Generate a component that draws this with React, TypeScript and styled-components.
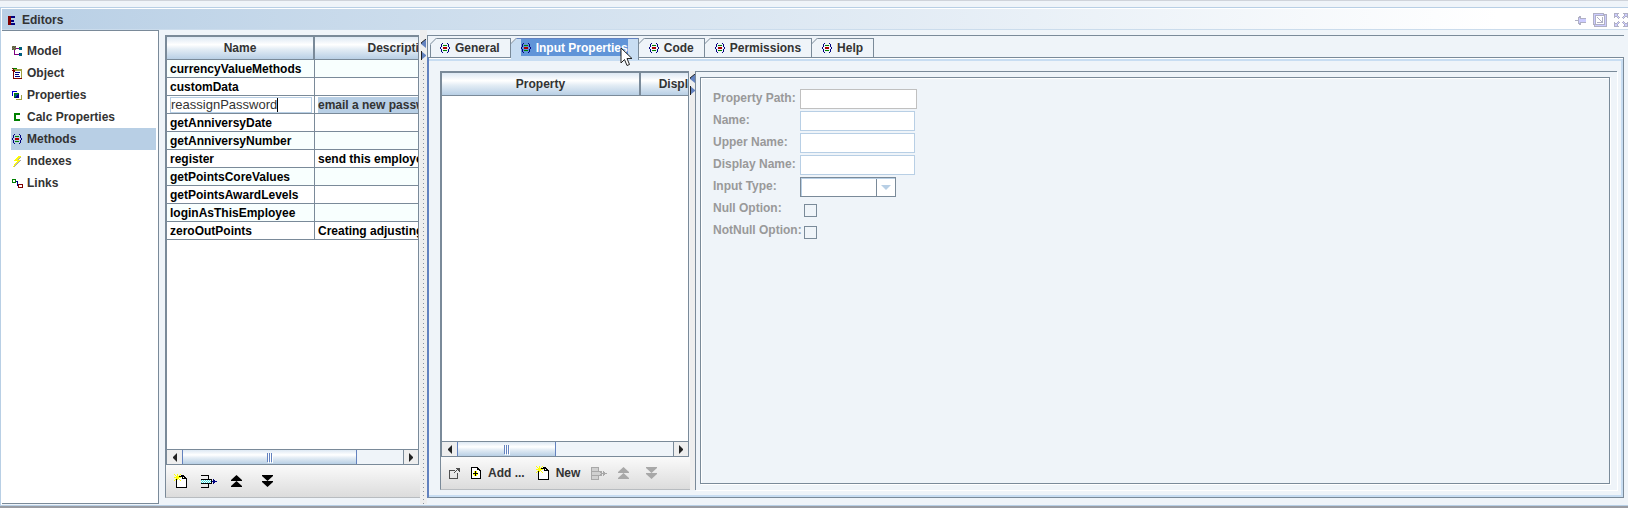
import React from 'react';
import styled, { createGlobalStyle, css } from 'styled-components';

const c = {
  line: '#7a8a99',
  blue: '#6382bf',
  select: '#b8cfe5',
  tab: '#c8ddf2',
  bg: '#eff4f9',
  text: '#333333',
  muted: '#999999',
};

const headerFill = 'linear-gradient(#dde8f3, #ffffff 35%, #e4edf5 55%, #b8cfe5)';

const GlobalStyle = createGlobalStyle`
  * { box-sizing: border-box; }
  body { margin: 0; background: ${c.bg}; }
  body, button, input, select, table {
    font: bold 12px/16px "Liberation Sans", Arial, sans-serif;
    color: ${c.text};
  }
  button { border: 0; padding: 0; background: none; }
`;

/* ---------- icons ---------- */

const palette: Record<string, string> = {
  k: '#000000', n: '#000080', b: '#0000cc', r: '#aa0000', m: '#800000', g: '#008000',
  o: '#808040', y: '#ffff00', Y: '#e8dc50', p: '#800080', t: '#006080', c: '#40e0e0',
  w: '#ffffff', a: '#a8a8a8', s: '#d0d0d0', v: '#b0b0c4', l: '#ccccff', d: '#505050', e: '#a0a040',
};

const art = {
  editors: ['mmmnnnn', 'mmmnnnn', 'mmm....', 'mmm....', 'mmmnnn.', 'mmmnnn.', 'mmm....', 'mmmnnnn', 'mmmnnnn'],
  model: ['odod.......', 'dodo...gtt.', 'ododpppttt.', 'dodo...ttt.', '..p........', '..p........', '..p........', '..p....ntt.', '..pppppttt.', '.......ttt.'],
  object: ['mgggg......', '.meeeeeeee.', 'mmmeeeeeee.', '.mmwwwwwwe.', '.mwnnnnnwe.', '.mwwwwwwwe.', '.mwnnnnwwe.', '.mwwwwwwwe.', '.mwnnnnnwe.', '.mwwwwwwwe.', '.mmmmmmmmm.'],
  properties: ['bbbbb......', 'bwwww......', 'bwggggg....', 'bwgtttn....', 'bwgttnn..e.', '..gtnnn..e.', '..gnnnn..e.', '.........e.', '....eeeeee.'],
  calc: ['gggggg', 'gggggg', 'gg....', 'gg....', 'gg....', 'gg....', 'gggggg', 'gggggg'],
  methods: ['..n....n..', '.n......n.', '.n.gggg.n.', '.n......n.', 'n..rrrr..n', 'n..rrrr..n', '.n......n.', '.n.gggg.n.', '.n......n.', '..n....n..'],
  indexes: ['......yyy.', '.....yyYa.', '....yyYa..', '...yyYa...', '..yyyyyya.', '.....yYa..', '....yYa...', '...yYa....', '..yYa.....', '..ya......', '.ya.......'],
  links: ['gggg.......', 'gwwg.......', 'gwwgnn.....', 'gggg.n.....', '.....n.....', '.....nmmmmm', '.....nmwwwm', '......mwwwm', '......mmmmm'],
  fresh: ['y..y..y......', '.y.y.y.kkk...', '..yyykkkkkk..', 'yyyyyyywkwkk.', '..yyywwwkkkkk', '.ykywywwwwwwk', 'y.kwwwywwwwwk', '..kwwwwwwwwwk', '..kwwwwwwwwwk', '..kwwwwwwwwwk', '..kwwwwwwwwwk', '..kwwwwwwwwwk', '..kwwwwwwwwwk', '..kkkkkkkkkkk'],
  insert: ['kkkkkkkk........', '.......k........', '.......k........', '.......k........', 'kkkkkkkkkkk.n...', 'cwcwcwcwcwk.nn..', 'wcwcwcwcwcknnnnn', 'cwcwcwcwcwk.nn..', 'kkkkkkkkkkk.n...', '.......k........', '.......k........', '.......k........', 'kkkkkkkk........'],
  insertOff: ['aaaaaaaa........', 'assssssa........', 'assssssa........', 'assssssa........', 'aaaaaaaaaaa.a...', 'assssssssaa.aa..', 'asssssssssaaaaaa', 'assssssssaa.aa..', 'aaaaaaaaaaa.a...', 'assssssa........', 'assssssa........', 'assssssa........', 'aaaaaaaa........'],
  add: ['kkkkkkk...', 'kwwwwwkk..', 'kwwwwwkkk.', 'kwwwwwwwkk', 'kwwykywwwk', 'kwwykywwwk', 'kwkkkkkwwk', 'kwyykyywwk', 'kwwykywwwk', 'kwwwwwwwwk', 'kwwwwwwwwk', 'kkkkkkkkkk'],
  pop: ['.......dddd', '........ddd', 'dddddd.d.dd', 'd.....d...d', 'd....d.....', 'd.......d..', 'd.......d..', 'd.......d..', 'd.......d..', 'd.......d..', 'ddddddddd..'],
  pin: ['....vv.....', '...vvv.....', '...vlvvvvvv', '...vlllllll', 'vvvvlllllll', '...vlllllll', '...vlvvvvvv', '...vvv.....', '....vv.....'],
  restore: ['vvvvvvvvvvv...', 'vlllllllllvvvv', 'vlvvvvvvvvvvlv', 'vlvwwwwwwwwvlv', 'vlvwvwwwwvwvlv', 'vlvwwvwwwvwvlv', 'vlvwwwvwwvwvlv', 'vlvwwwwvwvwvlv', 'vlvwwwwwvvwvlv', 'vlvwvvvvvvwvlv', 'vlvwwwwwwwwvlv', 'vvvvvvvvvvvvlv', '.vlllllllllllv', '.vvvvvvvvvvvvv'],
  expand: ['vvvvv....vvvvv', 'vllv......vllv', 'vllv......vllv', 'vvvlv....vlvvv', 'v..vlv..vlv..v', '....v....v....', '..............', '..............', '....v....v....', 'v..vlv..vlv..v', 'vvvlv....vlvvv', 'vllv......vllv', 'vllv......vllv', 'vvvvv....vvvvv'],
};

type IconName = keyof typeof art;

const Svg = styled.svg`
  display: block;
  flex: none;
`;

function Icon({ name }: { name: IconName }) {
  const rows = art[name];
  const w = rows[0].length;
  return (
    <Svg width={w} height={rows.length} shapeRendering="crispEdges" aria-hidden="true">
      {rows.flatMap((row, y) =>
        [...row].map((ch, x) => (ch === '.' ? null : <rect key={`${x}-${y}`} x={x} y={y} width="1" height="1" fill={palette[ch]} />)),
      )}
    </Svg>
  );
}

function Chevrons({ down, off }: { down?: boolean; off?: boolean }) {
  return (
    <Svg width="11" height="12" fill={off ? '#a8a8a8' : '#000'} aria-hidden="true">
      <path d={down ? 'M0 0H11V1L5.500 6L0 1ZM0 6H11V7L5.500 12L0 7Z' : 'M5.500 0L11 5V6H0V5ZM5.500 6L11 11V12H0V11Z'} />
    </Svg>
  );
}

/* ---------- frame ---------- */

const Page = styled.div`
  display: flex;
  flex-direction: column;
  min-height: 100vh;
  border-top: 1px solid #cfd3da;
  border-bottom: 2px solid #999ca3;
  padding-top: 6px;
`;

const Frame = styled.section`
  flex: 1;
  display: flex;
  flex-direction: column;
  border: solid ${c.select};
  border-width: 1px 0 1px 1px;
  box-shadow: inset 1px 1px #ffffff;
  padding: 1px 0 1px 1px;
`;

const TitleBar = styled.header`
  display: flex;
  align-items: center;
  gap: 7px;
  height: 21px;
  padding: 2px 0 0 6px;
  background: linear-gradient(90deg, #b8cfe5, #ffffff 92%);
  border-bottom: 1px solid #cbdcec;
`;

const Title = styled.h1`
  flex: 1;
  margin: 0;
  font: inherit;
`;

const WindowButtons = styled.div`
  display: flex;
  align-items: center;
  gap: 7px;
`;

const Body = styled.div`
  flex: 1;
  display: flex;
  min-width: 0;
`;

const Nav = styled.nav`
  flex: none;
  width: 157px;
  padding: 9px 2px 8px 9px;
  background: #ffffff;
  border: 1px solid ${c.line};
  border-left: 0;
  display: flex;
  flex-direction: column;
`;

const NavLink = styled.a<{ $active?: boolean }>`
  display: flex;
  align-items: center;
  height: 22px;
  gap: 4px;
  color: ${c.text};
  text-decoration: none;
  background: ${(p) => (p.$active ? c.select : 'transparent')};
`;

const NavIcon = styled.span`
  display: flex;
  justify-content: center;
  width: 12px;
`;

/* ---------- table panes ---------- */

const ListPane = styled.section<{ $width: number; $spaced?: boolean }>`
  flex: none;
  display: flex;
  flex-direction: column;
  width: ${(p) => p.$width}px;
  margin: ${(p) => (p.$spaced ? '5px 0 6px 6px' : '0')};
`;

const Scroller = styled.div`
  flex: 1;
  display: flex;
  flex-direction: column;
  overflow: hidden;
  margin-right: 1px;
  border: 2px solid ${c.line};
  border-width: 2px 1px 0 2px;
  background: #ffffff;
`;

const Viewport = styled.div`
  flex: 1;
  overflow: hidden;
`;

const Grid = styled.table<{ $width: number }>`
  table-layout: fixed;
  width: ${(p) => p.$width}px;
  border-spacing: 0;
  white-space: nowrap;
`;

const HeadCell = styled.th<{ $width: number }>`
  width: ${(p) => p.$width}px;
  height: 23px;
  padding: 0;
  background: ${headerFill};
  border-right: 2px solid ${c.line};
  border-bottom: 1px solid ${c.line};
`;

const Cell = styled.td`
  height: 18px;
  padding: 1px 2px 0 3px;
  overflow: hidden;
  color: #000000;
  line-height: 16px;
  border-right: 1px solid ${c.line};
  border-bottom: 1px solid ${c.line};
`;

const Row = styled.tr`
  &:nth-child(odd) { background: #f8fffe; }
  &:nth-child(3) { background: #ffffff; }
`;

const Picked = styled.div`
  background: ${c.select};
  color: ${c.text};
`;

const CellEditor = styled.div`
  display: flex;
  align-items: center;
  height: 16px;
  border: 1px solid ${c.select};
  background: #ffffff;
`;

const CellInput = styled.input`
  field-sizing: content;
  height: 14px;
  padding: 0;
  border: 0;
  border-right: 1px solid #000000;
  outline: 0;
  background: none;
  font-size: 13px;
  font-weight: normal;
  line-height: 14px;
`;

const ScrollBar = styled.div`
  display: flex;
  height: 16px;
  border: solid ${c.line};
  border-width: 1px 0;
  background: ${c.bg};
`;

const ScrollArrow = styled.button<{ $end?: boolean }>`
  width: 15px;
  display: flex;
  align-items: center;
  justify-content: center;
  background: #eeeeee;
  border-left: ${(p) => (p.$end ? `1px solid ${c.line}` : '0')};
`;

const Thumb = styled.div<{ $share: number }>`
  display: flex;
  align-items: center;
  justify-content: center;
  gap: 1px;
  width: ${(p) => p.$share}%;
  border: solid ${c.blue};
  border-width: 0 1px;
  background: ${headerFill};
`;

const Grip = styled.i`
  width: 1px;
  height: 9px;
  background: ${c.blue};
  box-shadow: 1px 1px #ffffff;
`;

const Track = styled.div`
  flex: 1;
  display: flex;
`;

function HScroll({ share }: { share: number }) {
  return (
    <ScrollBar>
      <ScrollArrow aria-label="Scroll left">
        <Svg width="4" height="9"><path d="M4 0V9L0 5V4Z" fill="#222" /></Svg>
      </ScrollArrow>
      <Track>
        <Thumb $share={share}><Grip /><Grip /><Grip /></Thumb>
      </Track>
      <ScrollArrow $end aria-label="Scroll right">
        <Svg width="4" height="9"><path d="M0 0V9L4 5V4Z" fill="#222" /></Svg>
      </ScrollArrow>
    </ScrollBar>
  );
}

const Toolbar = styled.div<{ $gap: number }>`
  display: flex;
  align-items: center;
  gap: ${(p) => p.$gap}px;
  height: 33px;
  padding-left: 8px;
  border-left: 1px solid ${c.line};
  border-bottom: 1px solid #b8bcc0;
  background: linear-gradient(#fafafa, #dcdcdc);
`;

const ToolButton = styled.button<{ $last?: boolean }>`
  display: flex;
  align-items: center;
  gap: 7px;
  padding-left: ${(p) => (p.$last ? 6 : 0)}px;
  white-space: nowrap;
`;

/* ---------- split divider ---------- */

const DividerBar = styled.div<{ $width: number; $dotted?: boolean }>`
  flex: none;
  display: flex;
  flex-direction: column;
  align-items: center;
  gap: 3px;
  width: ${(p) => p.$width}px;
  padding-top: ${(p) => (p.$dotted ? 9 : 3)}px;
  background: #eeeeee;
`;

const Dots = styled.div`
  flex: 1;
  width: 1px;
  background: repeating-linear-gradient(#8a94a0 0 1px, transparent 1px 4px);
`;

function Divider({ width, dotted }: { width: number; dotted?: boolean }) {
  return (
    <DividerBar $width={width} $dotted={dotted}>
      <Svg width="5" height="9"><path d="M5 0V9L0 5V4Z" fill={c.blue} /><path d="M5 0L0 4V5" fill="none" stroke="#222" /></Svg>
      <Svg width="5" height="9"><path d="M0 0V9L5 5V4Z" fill={c.blue} /><path d="M0 0V9" stroke="#222" strokeWidth="2" /></Svg>
      {dotted && <Dots />}
    </DividerBar>
  );
}

/* ---------- tabs ---------- */

const Tabbed = styled.section`
  flex: 1;
  min-width: 0;
  display: flex;
  flex-direction: column;
  margin: 5px 4px 6px 0;
  border-top: 1px solid ${c.line};
`;

const TabList = styled.div`
  position: relative;
  z-index: 1;
  display: flex;
  align-items: flex-start;
  height: 21px;
  padding: 2px 0 0 2px;
  border-left: 1px solid ${c.line};
`;

const Highlight = styled.span<{ $on?: boolean }>`
  display: flex;
  align-items: center;
  gap: 5px;
  height: 17px;
  ${(p) => p.$on && css`
    background: #6094d8;
    color: #ffffff;
  `}
`;

const Tab = styled.button<{ $active?: boolean; $first?: boolean }>`
  position: relative;
  height: ${(p) => (p.$active ? 22 : 19)}px;
  display: flex;
  align-items: flex-start;
  padding: 0 10px 0 ${(p) => (p.$first ? 9 : 10)}px;
  border: solid ${(p) => (p.$active ? c.blue : c.line)};
  border-width: 1px 1px 0 ${(p) => (p.$first ? 1 : 0)}px;
  border-right-color: ${c.line};
  background: ${(p) => (p.$active ? c.tab : c.bg)};
`;

const Slant = styled.svg`
  position: absolute;
  left: -1px;
  top: -1px;
`;

const Cursor = styled.svg`
  position: absolute;
  left: 109px;
  top: 8px;
  z-index: 2;
`;

const TabPanel = styled.div`
  flex: 1;
  display: flex;
  padding: 13px 6px 7px 11px;
  border: solid ${c.line};
  border-width: 1px 1px 1px 2px;
  border-left-color: ${c.blue};
  box-shadow: inset 0 1px #ffffff, inset -2px -2px ${c.tab}, inset 0 3px ${c.tab};
`;

const Outer = styled.div`
  flex: 1;
  min-width: 0;
  display: flex;
  padding: 5px 7px 6px 4px;
  border: 1px solid ${c.line};
  border-width: 1px 0 0 1px;
  box-shadow: 1px 1px #ffffff;
`;

/* ---------- property form ---------- */

const Form = styled.form`
  flex: 1;
  display: flex;
  flex-direction: column;
  gap: 2px;
  padding: 11px 12px;
  border: 1px solid ${c.line};
  box-shadow: 1px 1px #ffffff, inset 1px 1px #ffffff;
`;

const Field = styled.div`
  display: flex;
  align-items: center;
  height: 20px;
`;

const Label = styled.label`
  width: 87px;
  height: 20px;
  color: ${c.muted};
  line-height: 18px;
  white-space: nowrap;
`;

const TextBox = styled.input<{ $wide?: boolean }>`
  width: ${(p) => (p.$wide ? 117 : 115)}px;
  height: 20px;
  border: 1px solid ${(p) => (p.$wide ? '#c0c0c0' : c.select)};
  background: #ffffff;
`;

const Select = styled.select`
  appearance: none;
  width: 96px;
  height: 20px;
  border: 1px solid ${c.line};
  opacity: 1;
  background: linear-gradient(${c.line}, ${c.line}) 75px 0 / 1px 100% no-repeat, #ffffff;
  box-shadow: inset 1px 1px ${c.select};
`;

const SelectWrap = styled.div`
  position: relative;
  display: flex;
`;

const SelectArrow = styled.svg`
  position: absolute;
  right: 5px;
  top: 8px;
  pointer-events: none;
`;

const Check = styled.input`
  appearance: none;
  width: 13px;
  height: 13px;
  margin: 3px 4px 0;
  border: 1px solid ${c.line};
`;

const navItems: [string, IconName][] = [
  ['Model', 'model'], ['Object', 'object'], ['Properties', 'properties'], ['Calc Properties', 'calc'],
  ['Methods', 'methods'], ['Indexes', 'indexes'], ['Links', 'links'],
];

const methods: [string, string][] = [
  ['currencyValueMethods', ''], ['customData', ''], ['reassignPassword', 'email a new password'],
  ['getAnniversyDate', ''], ['getAnniversyNumber', ''], ['register', 'send this employee'],
  ['getPointsCoreValues', ''], ['getPointsAwardLevels', ''], ['loginAsThisEmployee', ''],
  ['zeroOutPoints', 'Creating adjusting'],
];

const tabs = ['General', 'Input Properties', 'Code', 'Permissions', 'Help'];
const textFields = ['Property Path', 'Name', 'Upper Name', 'Display Name'];

export default function App() {
  return (
    <Page>
      <GlobalStyle />
      <Frame>
        <TitleBar>
          <Icon name="editors" />
          <Title>Editors</Title>
          <WindowButtons>
            <button aria-label="Pin"><Icon name="pin" /></button>
            <button aria-label="Restore"><Icon name="restore" /></button>
            <button aria-label="Maximize"><Icon name="expand" /></button>
          </WindowButtons>
        </TitleBar>
        <Body>
          <Nav>
            {navItems.map(([label, icon]) => (
              <NavLink key={label} href="#" $active={label === 'Methods'}>
                <NavIcon><Icon name={icon} /></NavIcon>
                {label}
              </NavLink>
            ))}
          </Nav>

          <ListPane $width={255} $spaced>
            <Scroller>
              <Viewport>
                <Grid $width={321}>
                  <thead>
                    <tr><HeadCell $width={148}>Name</HeadCell><HeadCell $width={173}>Description</HeadCell></tr>
                  </thead>
                  <tbody>
                    {methods.map(([name, description]) => {
                      const editing = name === 'reassignPassword';
                      return (
                        <Row key={name}>
                          <Cell>
                            {editing
                              ? <CellEditor><CellInput aria-label="Name" defaultValue={name} /></CellEditor>
                              : name}
                          </Cell>
                          <Cell>{editing ? <Picked>{description}</Picked> : description}</Cell>
                        </Row>
                      );
                    })}
                  </tbody>
                </Grid>
              </Viewport>
              <HScroll share={79} />
            </Scroller>
            <Toolbar $gap={14}>
              <ToolButton aria-label="New"><Icon name="fresh" /></ToolButton>
              <ToolButton aria-label="Insert"><Icon name="insert" /></ToolButton>
              <ToolButton aria-label="Move up"><Chevrons /></ToolButton>
              <ToolButton $last aria-label="Move down"><Chevrons down /></ToolButton>
            </Toolbar>
          </ListPane>

          <Divider width={7} dotted />

          <Tabbed>
            <TabList role="tablist">
              {tabs.map((label, i) => {
                const active = i === 1;
                return (
                  <Tab key={label} role="tab" aria-selected={active} $active={active} $first={i === 0}>
                    <Slant width="7" height="7">
                      <path d="M0 0H7L0 7Z" fill={c.bg} />
                      {i > 0 && <path d="M0.500 0V7" stroke={c.line} />}
                      <path d="M0 6.500L6.500 0" stroke={c.line} />
                    </Slant>
                    <Highlight $on={active}><Icon name="methods" />{label}</Highlight>
                    {active && (
                      <Cursor width="13" height="20" viewBox="0 0 13 20">
                        <path d="M1 1V16L4.500 12.500L7 18.500L9.500 17.500L7 11.500H12Z" fill="#fff" stroke="#222" />
                      </Cursor>
                    )}
                  </Tab>
                );
              })}
            </TabList>
            <TabPanel role="tabpanel">
              <ListPane $width={250}>
                <Scroller>
                  <Viewport>
                    <Grid $width={315}>
                      <thead>
                        <tr><HeadCell $width={199}>Property</HeadCell><HeadCell $width={116}>Display Name</HeadCell></tr>
                      </thead>
                    </Grid>
                  </Viewport>
                  <HScroll share={46} />
                </Scroller>
                <Toolbar $gap={11}>
                  <ToolButton aria-label="Open"><Icon name="pop" /></ToolButton>
                  <ToolButton><Icon name="add" />Add ...</ToolButton>
                  <ToolButton><Icon name="fresh" />New</ToolButton>
                  <ToolButton disabled aria-label="Insert"><Icon name="insertOff" /></ToolButton>
                  <ToolButton disabled aria-label="Move up"><Chevrons off /></ToolButton>
                  <ToolButton $last disabled aria-label="Move down"><Chevrons down off /></ToolButton>
                </Toolbar>
              </ListPane>
              <Divider width={5} />
              <Outer>
                <Form>
                  {textFields.map((label, i) => (
                    <Field key={label}>
                      <Label htmlFor={label}>{label}:</Label>
                      <TextBox id={label} $wide={i === 0} disabled />
                    </Field>
                  ))}
                  <Field>
                    <Label htmlFor="type">Input Type:</Label>
                    <SelectWrap>
                      <Select id="type" disabled><option /></Select>
                      <SelectArrow width="10" height="5"><path d="M0 0H10L5 5Z" fill={c.select} /></SelectArrow>
                    </SelectWrap>
                  </Field>
                  <Field>
                    <Label htmlFor="null">Null Option:</Label>
                    <Check id="null" type="checkbox" disabled />
                  </Field>
                  <Field>
                    <Label htmlFor="notnull">NotNull Option:</Label>
                    <Check id="notnull" type="checkbox" disabled />
                  </Field>
                </Form>
              </Outer>
            </TabPanel>
          </Tabbed>
        </Body>
      </Frame>
    </Page>
  );
}
